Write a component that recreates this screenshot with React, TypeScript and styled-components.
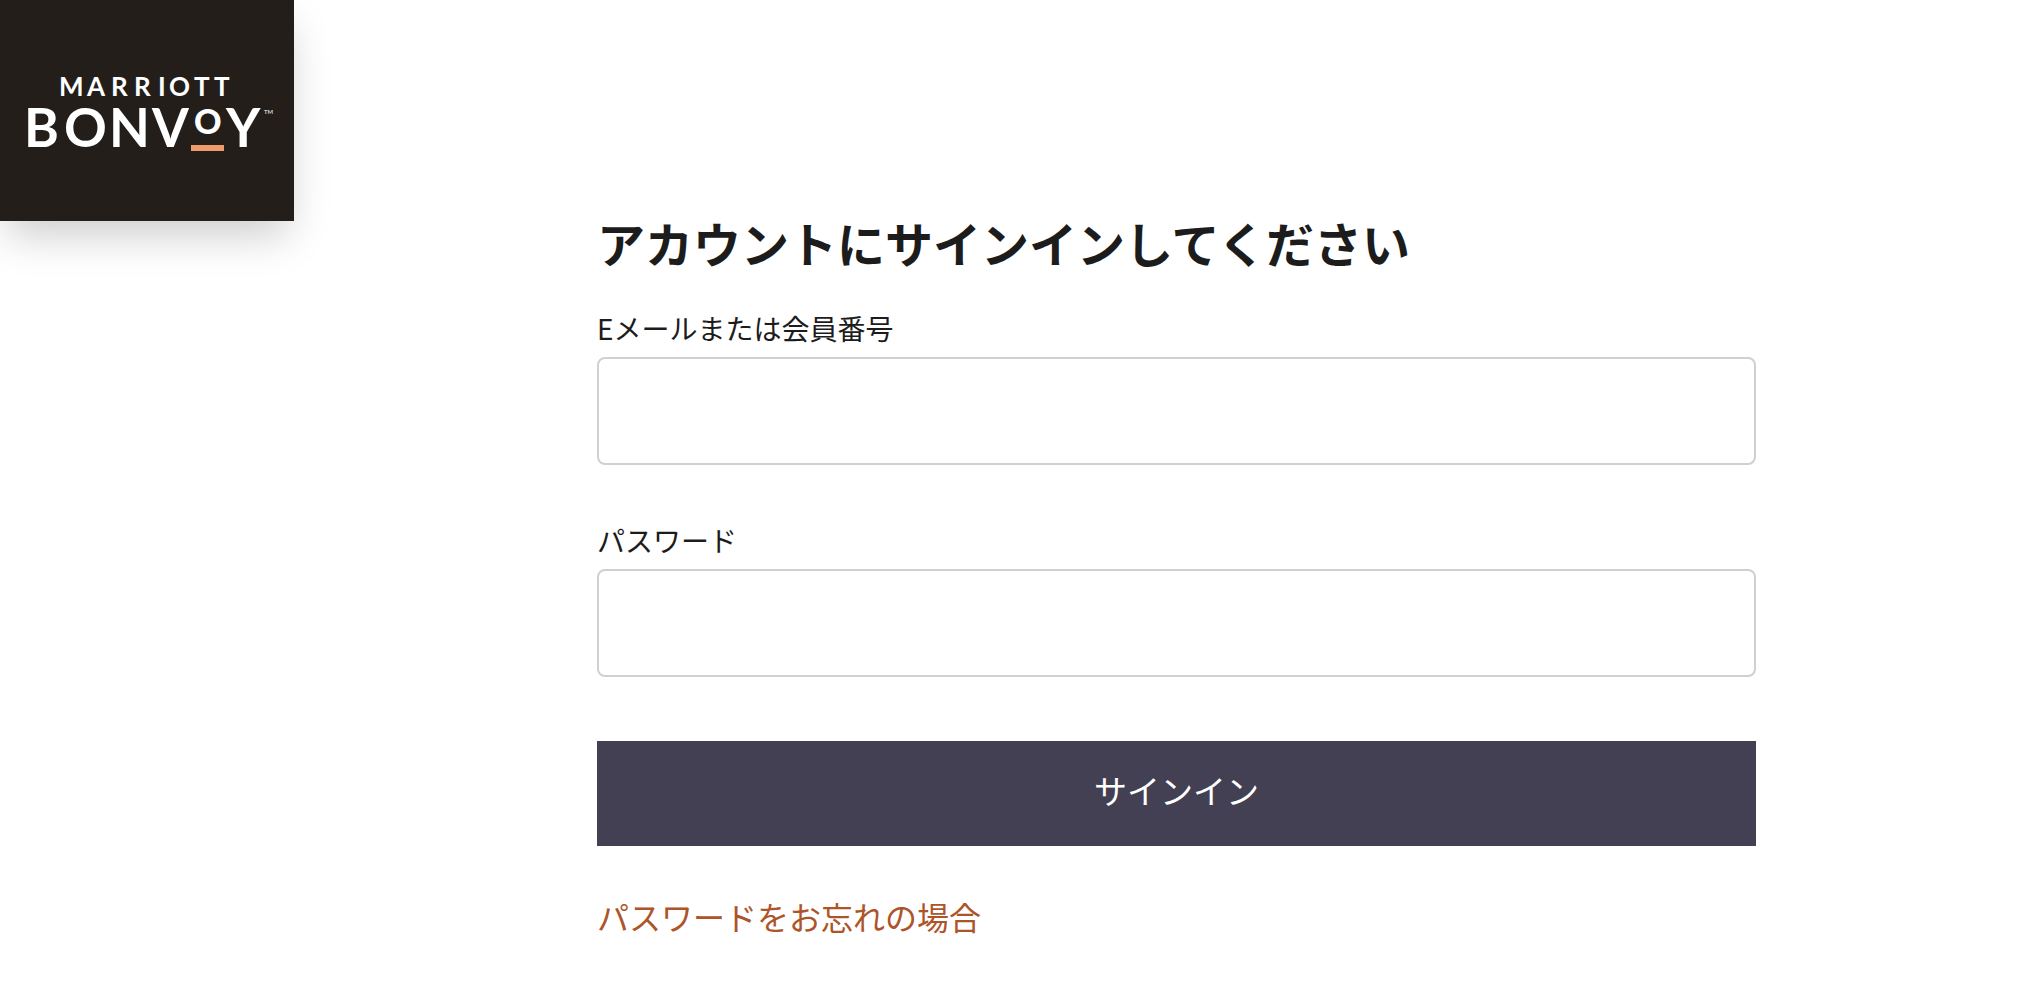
import React from "react";
import styled, { createGlobalStyle } from "styled-components";

const GlobalStyle = createGlobalStyle`
  *, *::before, *::after { box-sizing: border-box; }
  body {
    margin: 0;
    background: #ffffff;
    color: #1c1c1c;
    font-family: "Noto Sans CJK JP", "Liberation Sans", sans-serif;
  }
`;

const Page = styled.div`
  display: flex;
  align-items: flex-start;
  min-height: 100vh;
`;

const Brand = styled.a`
  display: block;
  flex: none;
  background: #231e1a;
  box-shadow: 0 20px 40px -6px rgba(0, 0, 0, 0.2);
`;

const LogoArt = styled.svg`
  display: block;
  width: 294px;
  height: 221px;
  fill: #ffffff;
  font-family: Lato, "Liberation Sans", sans-serif;
  font-weight: 700;
`;

const Main = styled.main`
  flex: 1;
  min-width: 0;
  padding: 206px 280px 48px 303px;
`;

const Title = styled.h1`
  margin: 0 0 30px;
  font-size: 48px;
  line-height: 72px;
  font-weight: 700;
`;

const Form = styled.form`
  display: flex;
  flex-direction: column;
`;

const Fields = styled.div`
  display: flex;
  flex-direction: column;
  gap: 55px;
  margin-bottom: 64px;
`;

const Field = styled.div`
  display: flex;
  flex-direction: column;
  gap: 9px;
`;

const Label = styled.label`
  font-size: 28px;
  line-height: 40px;
`;

const TextInput = styled.input`
  width: 100%;
  height: 108px;
  padding: 0 24px;
  border: 2px solid #d0d0d0;
  border-radius: 8px;
  background: #ffffff;
  color: inherit;
  font: inherit;
  font-size: 32px;
`;

const SubmitButton = styled.button`
  height: 105px;
  padding: 0 0 8px;
  border: 0;
  background: #444054;
  color: #ffffff;
  font: inherit;
  font-size: 33px;
  cursor: pointer;
`;

const ForgotLink = styled.a`
  align-self: flex-start;
  margin-top: 46px;
  color: #ad5429;
  font-size: 32px;
  line-height: 48px;
  text-decoration: none;
`;

function Logo() {
  return (
    <LogoArt viewBox="0 0 294 221" role="img" aria-label="Marriott Bonvoy">
      <text y="96" fontSize="26" x="59 87 111 134 158 169 194 214">MARRIOTT</text>
      <text y="147" fontSize="53">
        <tspan x="24 64 109 152">BONV</tspan>
        <tspan x="194" y="134" fontSize="34" fontWeight="900">O</tspan>
        <tspan x="226" y="147">Y</tspan>
      </text>
      <text x="264" y="114" fontSize="6" fontWeight="400">TM</text>
      <rect x="191" y="145" width="33" height="6" fill="#f0996b" />
    </LogoArt>
  );
}

export default function App() {
  return (
    <>
      <GlobalStyle />
      <Page>
        <Brand href="#">
          <Logo />
        </Brand>
        <Main>
          <Title>アカウントにサインインしてください</Title>
          <Form onSubmit={(event: React.FormEvent) => event.preventDefault()}>
            <Fields>
              <Field>
                <Label htmlFor="user">Eメールまたは会員番号</Label>
                <TextInput id="user" type="text" autoComplete="username" />
              </Field>
              <Field>
                <Label htmlFor="password">パスワード</Label>
                <TextInput id="password" type="password" autoComplete="current-password" />
              </Field>
            </Fields>
            <SubmitButton type="submit">サインイン</SubmitButton>
            <ForgotLink href="#">パスワードをお忘れの場合</ForgotLink>
          </Form>
        </Main>
      </Page>
    </>
  );
}
